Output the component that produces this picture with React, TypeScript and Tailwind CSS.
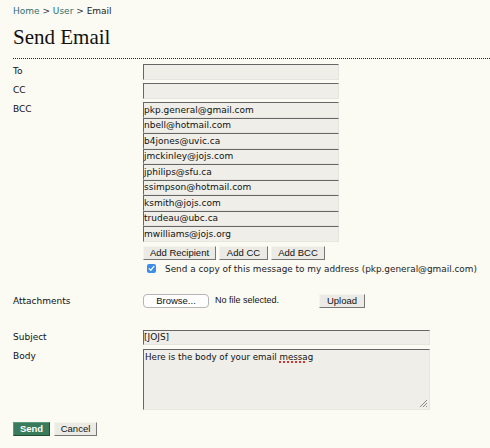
import React from "react";

const bccList = [
  "pkp.general@gmail.com",
  "nbell@hotmail.com",
  "b4jones@uvic.ca",
  "jmckinley@jojs.com",
  "jphilips@sfu.ca",
  "ssimpson@hotmail.com",
  "ksmith@jojs.com",
  "trudeau@ubc.ca",
  "mwilliams@jojs.org",
];

const field =
  "block w-[196px] border border-t-[#666] border-l-[#666] border-r-[#e6e5df] border-b-[#e6e5df] bg-[#efeee8] px-0 text-[9px] leading-[13px] text-[#111] outline-none font-['DejaVu_Sans',sans-serif]";

const btn =
  "h-[14px] border border-t-[#f4f3ee] border-l-[#f4f3ee] border-r-[#777] border-b-[#777] bg-[#ebeae4] text-[9.5px] leading-[12px] text-[#111] font-['Liberation_Sans',Arial,sans-serif]";

function Label({ children }: { children: React.ReactNode }) {
  return (
    <div className="w-[130px] shrink-0 text-[9px] leading-[14px] text-[#111]">
      {children}
    </div>
  );
}

export default function App() {
  return (
    <div className="min-h-[448px] w-[490px] bg-[#fbfaf3] font-['DejaVu_Sans',sans-serif] text-[#111]">
      <div className="pl-[13px] pt-[5px]">
        <div className="text-[9px] leading-[12px]">
          <span className="text-[#2e7070]">Home</span>
          <span className="text-[#333]"> &gt; </span>
          <span className="text-[#2e7070]">User</span>
          <span className="text-[#333]"> &gt; </span>
          <span className="text-[#222]">Email</span>
        </div>
        <h1 className="mt-[8px] border-b border-dotted border-[#222] pb-[9px] font-['Liberation_Serif',serif] text-[21px] leading-[24px] text-[#111]">
          Send Email
        </h1>

        <div className="mt-[5px]">
          <div className="flex">
            <Label>To</Label>
            <input readOnly className={`${field} h-[16px]`} />
          </div>
          <div className="mt-[3px] flex">
            <Label>CC</Label>
            <input readOnly className={`${field} h-[16px]`} />
          </div>
          <div className="mt-[3px] flex">
            <Label>BCC</Label>
            <div className="flex flex-col">
              {bccList.map((e) => (
                <input
                  key={e}
                  readOnly
                  defaultValue={e}
                  className={`${field} h-[15.5px]`}
                />
              ))}
              <div className="mt-[4px] flex gap-[3px]">
                <button className={`${btn} w-[73px]`}>Add Recipient</button>
                <button className={`${btn} w-[49px]`}>Add CC</button>
                <button className={`${btn} w-[54px]`}>Add BCC</button>
              </div>
              <div className="mt-[3px] flex h-[12px] items-center">
                <span className="ml-[4px] flex h-[9px] w-[9px] items-center justify-center rounded-[2px] bg-[#3d8ee8]">
                  <svg width="7" height="7" viewBox="0 0 8 8">
                    <path
                      d="M1.3 4.2 L3.2 6 L6.8 1.6"
                      fill="none"
                      stroke="#fff"
                      strokeWidth="1.4"
                      strokeLinecap="round"
                      strokeLinejoin="round"
                    />
                  </svg>
                </span>
                <span className="ml-[9px] whitespace-nowrap text-[8.9px] leading-[12px] text-[#222]">
                  Send a copy of this message to my address
                  (pkp.general@gmail.com)
                </span>
              </div>
            </div>
          </div>

          <div className="mt-[19px] flex items-center">
            <Label>Attachments</Label>
            <div className="flex w-[176px] items-center">
              <button className="h-[14px] w-[66px] rounded-[4px] border border-[#b5b5b5] bg-white text-[9.5px] leading-[12px] text-[#111] font-['Liberation_Sans',Arial,sans-serif]">
                Browse...
              </button>
              <span className="ml-[6px] text-[9px] text-[#111] font-['Liberation_Sans',Arial,sans-serif]">
                No file selected.
              </span>
            </div>
            <button className={`${btn} w-[46px]`}>Upload</button>
          </div>

          <div className="mt-[22px] flex">
            <Label>Subject</Label>
            <input
              readOnly
              defaultValue="[JOJS]"
              className={`${field} h-[15px] w-[287px]`}
            />
          </div>
          <div className="mt-[4px] flex">
            <Label>Body</Label>
            <div className="relative h-[61px] w-[287px] border border-t-[#666] border-l-[#666] border-r-[#e6e5df] border-b-[#e6e5df] bg-[#efeee8] pl-[1px] pt-[1px] text-[8.7px] leading-[12px] text-[#111]">
              Here is the body of your email{" "}
              <span className="underline decoration-[#e03030] decoration-dotted decoration-[1.5px] underline-offset-[2px]">
                messag
              </span>
              <svg
                className="absolute bottom-[1px] right-[1px]"
                width="9"
                height="9"
                viewBox="0 0 9 9"
              >
                <path
                  d="M8 1 L1 8 M8 4 L4 8 M8 7 L7 8"
                  stroke="#888"
                  strokeWidth="1"
                />
              </svg>
            </div>
          </div>

          <div className="mt-[12px] flex gap-[4px]">
            <button className="h-[14px] w-[37px] border border-t-[#5a9a7a] border-l-[#5a9a7a] border-r-[#244d38] border-b-[#244d38] bg-[#3a7b5b] text-[9.5px] font-bold leading-[12px] text-white font-['Liberation_Sans',Arial,sans-serif]">
              Send
            </button>
            <button className={`${btn} w-[43px]`}>Cancel</button>
          </div>
        </div>
      </div>
    </div>
  );
}
